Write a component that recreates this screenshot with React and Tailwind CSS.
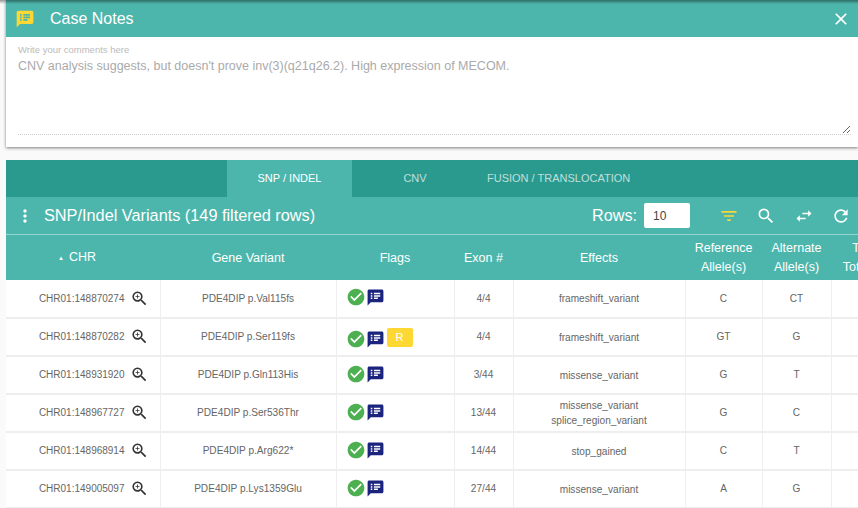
import {
  MdCheckCircle,
  MdClose,
  MdFilterList,
  MdMoreVert,
  MdRefresh,
  MdSearch,
  MdSpeakerNotes,
  MdSwapHoriz,
  MdZoomIn,
} from "react-icons/md";

const rows = [
  { chr: "CHR01:148870274", gene: "PDE4DIP p.Val115fs", exon: "4/4", effects: ["frameshift_variant"], ref: "C", alt: "CT" },
  { chr: "CHR01:148870282", gene: "PDE4DIP p.Ser119fs", exon: "4/4", effects: ["frameshift_variant"], ref: "GT", alt: "G", recurrent: true },
  { chr: "CHR01:148931920", gene: "PDE4DIP p.Gln113His", exon: "3/44", effects: ["missense_variant"], ref: "G", alt: "T" },
  { chr: "CHR01:148967727", gene: "PDE4DIP p.Ser536Thr", exon: "13/44", effects: ["missense_variant", "splice_region_variant"], ref: "G", alt: "C" },
  { chr: "CHR01:148968914", gene: "PDE4DIP p.Arg622*", exon: "14/44", effects: ["stop_gained"], ref: "C", alt: "T" },
  { chr: "CHR01:149005097", gene: "PDE4DIP p.Lys1359Glu", exon: "27/44", effects: ["missense_variant"], ref: "A", alt: "G" },
];

function App() {
  return (
    <div className="relative h-[508px] w-[858px] overflow-hidden bg-[#fafafa] pl-[6px] font-['Liberation_Sans',Arial,sans-serif]">

      {/* shadow of the app bar above the dialog */}
      <div className="absolute inset-x-0 top-0 h-1 bg-gradient-to-b from-black/40 to-transparent" />

      {/* ================= CASE NOTES ================= */}

      <div className="h-[147px] bg-white shadow-[0_1px_3px_rgba(0,0,0,0.5)]">

        <div className="flex h-[37px] items-center bg-[#4db6ac] text-white">
          <MdSpeakerNotes className="ml-[9px] text-[#fdd835]" size={20} />
          <span className="ml-[15px] text-[16px]">Case Notes</span>
          <MdClose className="ml-auto mr-[7px]" size={20} />
        </div>

        <div className="px-[12px] pt-[7px]">
          <div className="text-[9.5px] leading-[11px] text-[#bbbbbb]">
            Write your comments here
          </div>
          <textarea
            className="mt-[2px] block h-[78px] w-[833px] border-b border-dotted border-[#cccccc] text-[12.5px] leading-[18px] text-[#aaaaaa] outline-none"
            defaultValue="CNV analysis suggests, but doesn't prove inv(3)(q21q26.2). High expression of MECOM."
          />
        </div>

      </div>

      {/* ================= VARIANTS ================= */}

      <div className="mt-[13px] overflow-hidden">

        <div className="flex h-[37px] bg-[#2b9a8e] pl-[221px] text-[11px] uppercase">
          <div className="flex w-[125px] items-center justify-center bg-[#4db6ac] text-white">
            SNP / INDEL
          </div>
          <div className="flex w-[126px] items-center justify-center text-white/70">
            CNV
          </div>
          <div className="flex items-center px-[9px] text-white/70">
            Fusion / Translocation
          </div>
        </div>

        <div className="flex h-[38px] items-center border-b border-white/40 bg-[#4db6ac] text-white">
          <MdMoreVert className="ml-[9px]" size={20} />
          <span className="ml-[9px] text-[16.3px]">SNP/Indel Variants (149 filtered rows)</span>
          <span className="ml-auto text-[16.2px]">Rows:</span>
          <div className="ml-[7px] flex h-[25px] w-[46px] items-center rounded-[2px] bg-white pl-[9px] text-[12px] text-[#444444]">
            10
          </div>
          <div className="ml-[20px] -mr-[2px] flex w-[150px] items-center justify-between">
            <span className="flex w-[38px] justify-center"><MdFilterList className="text-[#fdd835]" size={20} /></span>
            <span className="flex w-[38px] justify-center"><MdSearch size={20} /></span>
            <span className="flex w-[38px] justify-center"><MdSwapHoriz size={20} /></span>
            <span className="flex w-[38px] justify-center"><MdRefresh size={20} /></span>
          </div>
        </div>

        <table className="w-[875px] table-fixed border-collapse bg-white text-center text-[10.1px] text-[#666666]">

          <colgroup>
            <col className="w-[154px]" />
            <col className="w-[176px]" />
            <col className="w-[118px]" />
            <col className="w-[59px]" />
            <col className="w-[172px]" />
            <col className="w-[77px]" />
            <col className="w-[69px]" />
            <col className="w-[50px]" />
          </colgroup>

          <thead className="bg-[#4db6ac] text-[12.5px] leading-[19px] text-white">
            <tr className="h-[45px]">
              <th className="pr-[12px] pt-[1px] font-normal">
                <span className="mr-[5px] align-middle text-[6px]">▲</span>CHR
              </th>
              <th className="pt-[1px] font-normal">Gene Variant</th>
              <th className="pt-[1px] font-normal">Flags</th>
              <th className="pt-[1px] font-normal">Exon #</th>
              <th className="pt-[1px] font-normal">Effects</th>
              <th className="pt-[1px] font-normal">Reference<br />Allele(s)</th>
              <th className="pt-[1px] font-normal">Alternate<br />Allele(s)</th>
              <th className="pt-[1px] font-normal">T<br />Total</th>
            </tr>
          </thead>

          <tbody>
            {rows.map((row) => (
              <tr key={row.chr} className="h-[38px] border-b-2 border-[#eeeeee]">

                <td className="border-r border-[#eeeeee] p-0">
                  <div className="flex items-center justify-end pb-[1px] pr-[11px] text-[10px]">
                    <span>{row.chr}</span>
                    <MdZoomIn className="ml-[5px] text-[#333333]" size={19} />
                  </div>
                </td>

                <td className="border-r border-[#eeeeee] p-0">{row.gene}</td>

                <td className="border-r border-[#eeeeee] p-0 align-top">
                  <div className="flex items-end pl-[9px] pt-[7px]">
                    <MdCheckCircle className="text-[#4caf50]" size={20} />
                    <MdSpeakerNotes className="text-[#1a237e]" size={19} />
                    {row.recurrent && (
                      <span className="my-[2px] ml-[2px] flex h-[19px] w-[26px] items-center justify-center rounded-[2px] bg-[#fdd835] text-[11px] text-white">
                        R
                      </span>
                    )}
                  </div>
                </td>

                <td className="border-r border-[#eeeeee] p-0">{row.exon}</td>

                <td className="border-r border-[#eeeeee] p-0 leading-[15px]">
                  {row.effects.map((effect) => (
                    <div key={effect}>{effect}</div>
                  ))}
                </td>

                <td className="border-r border-[#eeeeee] p-0">{row.ref}</td>
                <td className="border-r border-[#eeeeee] p-0">{row.alt}</td>
                <td className="p-0"></td>

              </tr>
            ))}
          </tbody>

        </table>

      </div>

    </div>
  );
}

export default App;
